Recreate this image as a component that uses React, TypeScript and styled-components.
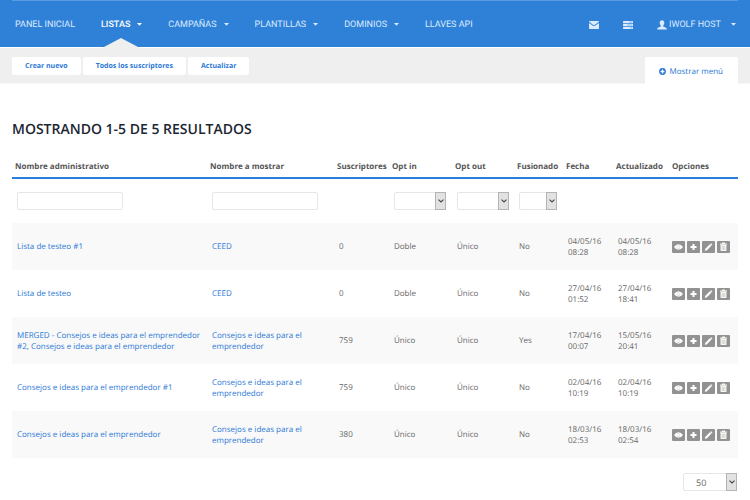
import React from "react";
import styled, { createGlobalStyle } from "styled-components";

const GlobalStyle = createGlobalStyle`
  *, *::before, *::after { box-sizing: border-box; }
  body {
    margin: 0;
    background: #fff;
    color: #666;
    font: 8px/11px "Open Sans", "Noto Sans", sans-serif;
    text-rendering: geometricPrecision;
  }
  button, input, select { font: inherit; color: inherit; margin: 0; text-rendering: inherit; }
  a { color: #2a78d6; text-decoration: none; }
`;

const Header = styled.header`
  background: #2f81d8;
  padding: 0 12px;
  border-bottom: 1px solid #fff;
`;

const HeaderInner = styled.div`
  display: flex;
  justify-content: space-between;
  height: 47px;
  border-top: 1px solid #5a9bdf;
`;

const NavGroup = styled.nav<{ $gap: number }>`
  display: flex;
  gap: ${(p) => p.$gap}px;
  padding: 0 2px 0 3px;
`;

const NavLink = styled.a<{ $active?: boolean }>`
  position: relative;
  display: flex;
  align-items: center;
  gap: 7px;
  padding-top: 1px;
  color: ${(p) => (p.$active ? "#fff" : "#dcebff")};
  font: ${(p) => (p.$active ? 500 : 400)} 9px/12px Roboto, sans-serif;
  white-space: nowrap;
`;

const Pointer = styled.svg`
  position: absolute;
  bottom: -1px;
  left: 50%;
  margin-left: -20px;
`;

const UserName = styled.span`
  display: flex;
  align-items: center;
  gap: 2px;
  margin-right: 3px;
`;

const SubBar = styled.div`
  display: flex;
  justify-content: space-between;
  height: 36px;
  padding: 9px 12px 0;
  background: #efefef;
  border-bottom: 1px solid #f6f6f6;
`;

const Actions = styled.div`
  display: flex;
  align-items: flex-start;
  gap: 2px;
`;

const ActionButton = styled.button`
  height: 18px;
  padding: 0 13px;
  border: 0;
  border-radius: 2px;
  background: #fff;
  color: #2a78d6;
  font-size: 7px;
  font-weight: 700;
  cursor: pointer;
`;

const MenuTab = styled.button`
  display: flex;
  align-items: center;
  gap: 4px;
  height: 27px;
  padding: 1px 15px 0 14px;
  border: 0;
  border-radius: 2px 2px 0 0;
  background: #fff;
  color: #2a78d6;
  cursor: pointer;
`;

const Main = styled.main`
  padding: 37px 12px 8px;
`;

const Title = styled.h1`
  margin: 0 0 16px;
  color: #1d2733;
  font-size: 14px;
  line-height: 18px;
  font-weight: 600;
`;

const Table = styled.table`
  width: 100%;
  table-layout: fixed;
  border-collapse: separate;
  border-spacing: 0;
`;

const Col = styled.col<{ $w?: number }>`
  width: ${(p) => (p.$w ? `${p.$w}px` : "auto")};
`;

const HeadCell = styled.th`
  height: 24px;
  padding: 0 0 0 3px;
  border-bottom: 2px solid #2a7fdc;
  color: #555;
  font-weight: 700;
  text-align: left;
  white-space: nowrap;
`;

const FilterCell = styled.td`
  height: 44px;
  padding: 0 5px;
`;

const BodyRow = styled.tr`
  height: 47px;
  &:nth-child(even) { background: #f9f9f9; }
`;

const Cell = styled.td`
  padding: 0 5px;
  vertical-align: middle;
`;

const IconCell = styled(Cell)`
  padding: 0 3px;
`;

const TextField = styled.input`
  display: block;
  width: 106px;
  height: 18px;
  padding: 0 4px;
  border: 1px solid #e6e6e6;
  border-radius: 2px;
  background: #fff;
`;

const SelectBox = styled.span<{ $w: number }>`
  display: grid;
  grid-template-columns: 1fr 11px;
  width: ${(p) => p.$w}px;
  height: 18px;
`;

const SelectField = styled.select`
  grid-area: 1 / 1 / 2 / 3;
  appearance: none;
  width: 100%;
  padding: 0 12px;
  border: 1px solid #e6e6e6;
  border-radius: 2px;
  background: #fff;
`;

const SelectArrow = styled.span`
  grid-area: 1 / 2 / 2 / 3;
  display: flex;
  align-items: center;
  justify-content: center;
  border: 1px solid #b4b4b4;
  background: #e2e2e2;
  pointer-events: none;
`;

const IconRow = styled.div`
  display: flex;
  gap: 2px;
`;

const IconButton = styled.button`
  display: flex;
  align-items: center;
  justify-content: center;
  width: 13px;
  height: 12px;
  padding: 0;
  border: 0;
  border-radius: 1px;
  background: #929292;
  cursor: pointer;
`;

const Footer = styled.footer`
  display: flex;
  justify-content: flex-end;
  padding: 15px 1px 0 0;
  font-size: 9px;
`;

const Caret = () => (
  <svg width="5" height="3" viewBox="0 0 5 3" aria-hidden="true">
    <path d="M0 0h5L2.5 2.8z" fill="currentColor" />
  </svg>
);

const EnvelopeIcon = () => (
  <svg width="10" height="8" viewBox="0 0 10 8" aria-hidden="true">
    <path
      d="M.8 0h8.4q.8 0 .8.8L5.6 4q-.6.4-1.2 0L0 .8Q0 0 .8 0zM0 1.9l4 2.9q1 .7 2 0l4-2.9v5.3q0 .8-.8.8H.8Q0 8 0 7.2z"
      fill="currentColor"
    />
  </svg>
);

const TasksIcon = () => (
  <svg width="10" height="8" viewBox="0 0 10 8" aria-hidden="true">
    <rect width="10" height="2.2" rx=".4" fill="currentColor" />
    <rect y="2.9" width="10" height="2.2" rx=".4" fill="currentColor" />
    <rect y="5.8" width="10" height="2.2" rx=".4" fill="currentColor" />
    <path d="M6 1.1h3M4 4h5M7 6.9h2" stroke="#2f81d8" strokeWidth=".5" />
  </svg>
);

const UserIcon = () => (
  <svg width="10" height="10" viewBox="0 0 10 10" aria-hidden="true">
    <path
      d="M5 .2c1.5 0 2.3 1 2.3 2.5 0 1.3-.6 2.2-1.1 2.8v1l2.8 1.2q.9.5.9 1.7H.1q0-1.2.9-1.7l2.8-1.2v-1C3.3 4.9 2.7 4 2.7 2.7 2.7 1.2 3.5.2 5 .2z"
      fill="currentColor"
    />
  </svg>
);

const CirclePlusIcon = () => (
  <svg width="7" height="7" viewBox="0 0 7 7" aria-hidden="true">
    <circle cx="3.5" cy="3.5" r="3.4" fill="currentColor" />
    <path d="M3.5 1.6v3.8M1.6 3.5h3.8" stroke="#fff" strokeWidth="1.3" />
  </svg>
);

const ChevronIcon = () => (
  <svg width="6" height="4" viewBox="0 0 6 4" aria-hidden="true">
    <path d="M.5.7 3 3 5.5.7" fill="none" stroke="#444" strokeWidth="1.1" />
  </svg>
);

const EyeIcon = () => (
  <svg width="9" height="8" viewBox="0 0 9 8" aria-hidden="true">
    <path d="M0 4q2-2.8 4.5-2.8T9 4Q7 6.8 4.5 6.8T0 4z" fill="#fff" />
    <circle cx="4.5" cy="4" r="1.8" fill="#c4c4c4" />
    <circle cx="4.5" cy="3.9" r="1.3" fill="#fff" />
  </svg>
);

const PlusIcon = () => (
  <svg width="9" height="8" viewBox="0 0 9 8" aria-hidden="true">
    <path d="M4.5 1v6M1.5 4h6" stroke="#fff" strokeWidth="2" />
  </svg>
);

const PencilIcon = () => (
  <svg width="9" height="8" viewBox="0 0 9 8" aria-hidden="true">
    <path
      d="M.8 7.8 1.2 5.9 5.8 1.3l1.5 1.5-4.6 4.6zM6.2.9 6.7.4q.3-.3.7 0l.8.8q.3.4 0 .7l-.5.5z"
      fill="#fff"
    />
  </svg>
);

const TrashIcon = () => (
  <svg width="9" height="10" viewBox="0 0 9 10" aria-hidden="true">
    <path
      d="M1 1.5h2V.6h3v.9h2v1.2H1zM1.5 3h6v5.2q0 .9-.9.9H2.4q-.9 0-.9-.9z"
      fill="#f6f6f2"
    />
    <path d="M3.2 4v4M4.5 4v4M5.8 4v4" stroke="#aaa" strokeWidth=".4" />
  </svg>
);

interface SelectProps {
  label: string;
  width: number;
  options: string[];
}

const Select = ({ label, width, options }: SelectProps) => (
  <SelectBox $w={width}>
    <SelectField aria-label={label}>
      {options.map((o) => (
        <option key={o}>{o}</option>
      ))}
    </SelectField>
    <SelectArrow>
      <ChevronIcon />
    </SelectArrow>
  </SelectBox>
);

const navItems = [
  { label: "PANEL INICIAL" },
  { label: "LISTAS", menu: true, active: true },
  { label: "CAMPAÑAS", menu: true },
  { label: "PLANTILLAS", menu: true },
  { label: "DOMINIOS", menu: true },
  { label: "LLAVES API" },
];

const columns: { label: string; width?: number }[] = [
  { label: "Nombre administrativo" },
  { label: "Nombre a mostrar", width: 127 },
  { label: "Suscriptores", width: 55 },
  { label: "Opt in", width: 63 },
  { label: "Opt out", width: 62 },
  { label: "Fusionado", width: 49 },
  { label: "Fecha", width: 50 },
  { label: "Actualizado", width: 56 },
  { label: "Opciones", width: 69 },
];

const longName = "Consejos e ideas para el emprendedor";

const lists = [
  { name: "Lista de testeo #1", shown: "CEED", count: 0, optIn: "Doble", merged: "No", created: "04/05/16 08:28", updated: "04/05/16 08:28" },
  { name: "Lista de testeo", shown: "CEED", count: 0, optIn: "Doble", merged: "No", created: "27/04/16 01:52", updated: "27/04/16 18:41" },
  { name: `MERGED - ${longName} #2, ${longName}`, shown: longName, count: 759, optIn: "Único", merged: "Yes", created: "17/04/16 00:07", updated: "15/05/16 20:41" },
  { name: `${longName} #1`, shown: longName, count: 759, optIn: "Único", merged: "No", created: "02/04/16 10:19", updated: "02/04/16 10:19" },
  { name: longName, shown: longName, count: 380, optIn: "Único", merged: "No", created: "18/03/16 02:53", updated: "18/03/16 02:54" },
];

export default function App() {
  return (
    <>
      <GlobalStyle />
      <Header>
        <HeaderInner>
          <NavGroup $gap={26} aria-label="Principal">
            {navItems.map((item) => (
              <NavLink key={item.label} href="#" $active={item.active}>
                {item.label}
                {item.menu && <Caret />}
                {item.active && (
                  <Pointer width="38" height="10" viewBox="0 0 38 10" aria-hidden="true">
                    <path d="M0 10 19 0l19 10z" fill="#efefef" />
                  </Pointer>
                )}
              </NavLink>
            ))}
          </NavGroup>
          <NavGroup $gap={24} aria-label="Cuenta">
            <NavLink href="#" aria-label="Mensajes">
              <EnvelopeIcon />
            </NavLink>
            <NavLink href="#" aria-label="Tareas">
              <TasksIcon />
            </NavLink>
            <NavLink href="#">
              <UserName>
                <UserIcon />
                IWOLF HOST
              </UserName>
              <Caret />
            </NavLink>
          </NavGroup>
        </HeaderInner>
      </Header>
      <SubBar>
        <Actions>
          <ActionButton>Crear nuevo</ActionButton>
          <ActionButton>Todos los suscriptores</ActionButton>
          <ActionButton>Actualizar</ActionButton>
        </Actions>
        <MenuTab>
          <CirclePlusIcon />
          Mostrar menú
        </MenuTab>
      </SubBar>
      <Main>
        <Title>MOSTRANDO 1-5 DE 5 RESULTADOS</Title>
        <Table>
          <colgroup>
            {columns.map((c) => (
              <Col key={c.label} $w={c.width} />
            ))}
          </colgroup>
          <thead>
            <tr>
              {columns.map((c) => (
                <HeadCell key={c.label} scope="col">
                  {c.label}
                </HeadCell>
              ))}
            </tr>
          </thead>
          <tbody>
            <tr>
              <FilterCell>
                <TextField type="text" aria-label="Nombre administrativo" />
              </FilterCell>
              <FilterCell>
                <TextField type="text" aria-label="Nombre a mostrar" />
              </FilterCell>
              <FilterCell />
              <FilterCell>
                <Select label="Opt in" width={52} options={["", "Doble", "Único"]} />
              </FilterCell>
              <FilterCell>
                <Select label="Opt out" width={52} options={["", "Doble", "Único"]} />
              </FilterCell>
              <FilterCell>
                <Select label="Fusionado" width={38} options={["", "Yes", "No"]} />
              </FilterCell>
              <FilterCell colSpan={3} />
            </tr>
            {lists.map((l) => (
              <BodyRow key={l.name}>
                <Cell>
                  <a href="#">{l.name}</a>
                </Cell>
                <Cell>
                  <a href="#">{l.shown}</a>
                </Cell>
                <Cell>{l.count}</Cell>
                <Cell>{l.optIn}</Cell>
                <Cell>Único</Cell>
                <Cell>{l.merged}</Cell>
                <Cell>{l.created}</Cell>
                <Cell>{l.updated}</Cell>
                <IconCell>
                  <IconRow>
                    <IconButton aria-label="Ver">
                      <EyeIcon />
                    </IconButton>
                    <IconButton aria-label="Copiar">
                      <PlusIcon />
                    </IconButton>
                    <IconButton aria-label="Editar">
                      <PencilIcon />
                    </IconButton>
                    <IconButton aria-label="Eliminar">
                      <TrashIcon />
                    </IconButton>
                  </IconRow>
                </IconCell>
              </BodyRow>
            ))}
          </tbody>
        </Table>
        <Footer>
          <Select label="Resultados por página" width={54} options={["50", "100"]} />
        </Footer>
      </Main>
    </>
  );
}
